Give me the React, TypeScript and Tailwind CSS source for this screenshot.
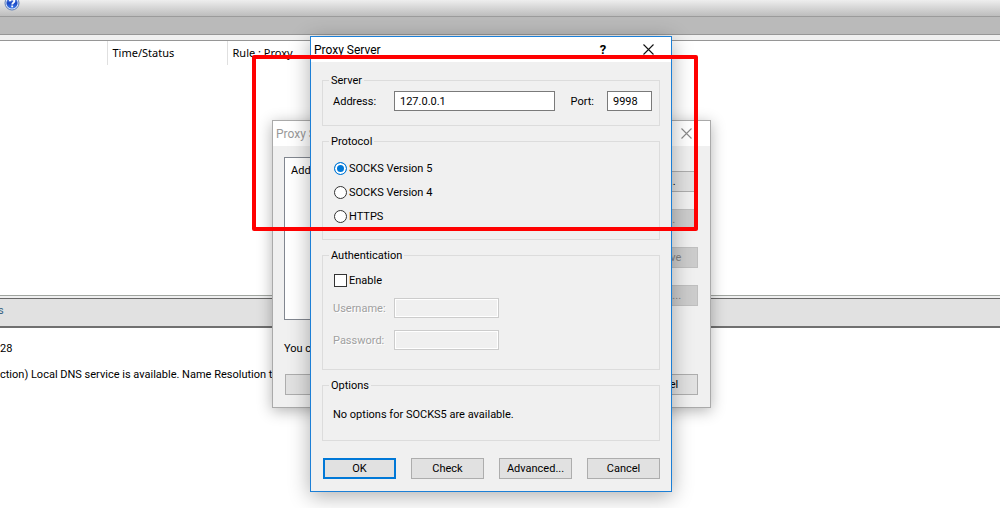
import React, { useState } from "react";
import type { ReactNode } from "react";

const BUTTON =
  "h-[21px] w-[73px] border border-[#adadad] bg-[#e1e1e1] text-center leading-5 text-black disabled:border-[#bfbfbf] disabled:bg-[#cccccc] disabled:text-[#838383]";
const FIELD = "h-5 border border-[#7a7a7a] bg-white px-[5px] text-black";
const DISABLED_FIELD =
  "h-5 w-[105px] border border-[#cccccc] bg-[#f0f0f0] shadow-[inset_0_0_0_1px_#ffffff]";

function HelpIcon() {
  return (
    <svg width="16" height="16" viewBox="0 0 16 16" aria-hidden="true">
      <defs>
        <linearGradient id="orb" x1="0" y1="0" x2="0" y2="1">
          <stop offset="0" stopColor="#7fa6ee" />
          <stop offset="0.5" stopColor="#1846c4" />
          <stop offset="1" stopColor="#3f7bea" />
        </linearGradient>
      </defs>
      <circle cx="8" cy="8" r="7" fill="#dfe8f8" stroke="#5f7fb8" strokeWidth="1" />
      <circle cx="8" cy="8" r="5.6" fill="url(#orb)" />
      <path
        d="M5.9 6.2C5.9 3.6 10.4 3.6 10.3 6.1C10.2 7.7 8.2 7.7 8.2 9.4M8.2 10.5V12.2"
        fill="none"
        stroke="#ffffff"
        strokeWidth="1.8"
      />
    </svg>
  );
}

function CloseIcon({ color }: { color: string }) {
  return (
    <svg width="11" height="11" viewBox="0 0 11 11" aria-hidden="true">
      <path d="M0.5 0.5L10.5 10.5M10.5 0.5L0.5 10.5" stroke={color} strokeWidth="1.1" />
    </svg>
  );
}

function Group({ title, className, children }: { title: string; className: string; children: ReactNode }) {
  return (
    <fieldset className={`min-w-0 border border-[#dcdcdc] px-[10px] ${className}`}>
      <legend className="-ml-1 h-[14px] px-[2px] leading-4">{title}</legend>
      {children}
    </fieldset>
  );
}

function ServerListDialog() {
  return (
    <section
      aria-label="Proxy servers"
      className="absolute top-[120px] left-[272px] w-[439px] border border-[#aaaaaa] bg-[#f0f0f0] shadow-[0_3px_14px_rgba(0,0,0,0.3)]"
    >
      <header className="flex h-[25px] items-center justify-between bg-white pr-[18px] pl-[3px] text-[#999999]">
        <h2 className="text-xs">Proxy S</h2>
        <button type="button" aria-label="Close list">
          <CloseIcon color="#8a8a8a" />
        </button>
      </header>
      <div className="px-3 pt-[11px] pb-3 pl-[11px]">
        <div className="flex">
          <div className="h-[163px] w-[320px] border border-[#828790] bg-white px-1.5 py-[5px]">Add</div>
          <div className="ml-auto flex flex-col gap-[17px] pt-[14px]">
            <button type="button" className={BUTTON}>Add...</button>
            <button type="button" disabled className={BUTTON}>Edit...</button>
            <button type="button" disabled className={BUTTON}>Remove</button>
            <button type="button" disabled className={BUTTON}>Check...</button>
          </div>
        </div>
        <p className="mt-[21px] leading-4">You c</p>
        <div className="mt-[17px] flex justify-between pl-px">
          <button type="button" aria-label="Accept" className={BUTTON}></button>
          <button type="button" className={BUTTON}>Cancel</button>
        </div>
      </div>
    </section>
  );
}

function ProxyServerDialog() {
  const [protocol, setProtocol] = useState("SOCKS Version 5");
  return (
    <section
      aria-label="Proxy server"
      className="absolute top-[36px] left-[310px] w-[362px] border border-[#1c7fd6] bg-[#f0f0f0] shadow-[0_4px_20px_rgba(0,0,0,0.32)]"
    >
      <header className="flex h-[25px] items-center bg-white pr-[17px] pl-[3px]">
        <h1 className="flex-1 text-xs">Proxy Server</h1>
        <button type="button" aria-label="Help" className="mr-9 w-2 text-[13px] font-bold">?</button>
        <button type="button" aria-label="Close">
          <CloseIcon color="#111111" />
        </button>
      </header>
      <div className="px-[11px] pt-[11px] pb-3">
        <Group title="Server" className="pt-1 pb-[14px]">
          <div className="flex items-center">
            <label htmlFor="address" className="w-[61px] pt-0.5">Address:</label>
            <input id="address" defaultValue="127.0.0.1" className={`${FIELD} w-[161px]`} />
            <label htmlFor="port" className="mr-[13px] ml-auto pt-0.5">Port:</label>
            <input id="port" defaultValue="9998" className={`${FIELD} mr-[-3px] w-[45px]`} />
          </div>
        </Group>
        <Group title="Protocol" className="mt-2 pt-2 pb-[11px]">
          {["SOCKS Version 5", "SOCKS Version 4", "HTTPS"].map((name) => (
            <label key={name} className="flex h-6 items-center gap-0.5 pl-px">
              <input
                type="radio"
                name="protocol"
                checked={protocol === name}
                onChange={() => setProtocol(name)}
                className="size-[13px] appearance-none rounded-full border border-[#333333] bg-white checked:border-[#0078d7] checked:bg-[#0078d7] checked:shadow-[inset_0_0_0_2px_#ffffff]"
              />
              <span className="pt-0.5">{name}</span>
            </label>
          ))}
        </Group>
        <Group title="Authentication" className="mt-2 pt-1.5 pb-[19px]">
          <label className="flex h-6 w-fit items-center gap-0.5 pl-px">
            <input type="checkbox" className="size-[13px] appearance-none border border-[#333333] bg-white checked:bg-[#0078d7]" />
            <span className="pt-0.5">Enable</span>
          </label>
          <div className="mt-1.5 flex flex-col gap-3 text-[#a0a0a0] [text-shadow:1px_1px_0_#ffffff]">
            <div className="flex items-center">
              <label htmlFor="username" className="w-[61px] pt-0.5">Username:</label>
              <input id="username" disabled className={DISABLED_FIELD} />
            </div>
            <div className="flex items-center">
              <label htmlFor="password" className="w-[61px] pt-0.5">Password:</label>
              <input id="password" type="password" disabled className={DISABLED_FIELD} />
            </div>
          </div>
        </Group>
        <Group title="Options" className="mt-2 pt-[15px] pb-[17px]">
          <p className="leading-4">No options for SOCKS5 are available.</p>
        </Group>
        <div className="mt-[17px] flex justify-between pl-px">
          <button
            type="button"
            className="h-[21px] w-[73px] border-2 border-[#0078d7] bg-[#e1e1e1] text-center leading-[18px]"
          >
            OK
          </button>
          <button type="button" className={BUTTON}>Check</button>
          <button type="button" className={BUTTON}>Advanced...</button>
          <button type="button" className={BUTTON}>Cancel</button>
        </div>
      </div>
    </section>
  );
}

export default function App() {
  return (
    <main className="relative flex h-screen flex-col overflow-hidden bg-white font-[Roboto,'Liberation_Sans',sans-serif] text-[11px] text-black">
      <div className="h-[17px] border-b border-[#9b9b9b] bg-linear-to-b from-[#eeeeee] to-[#bdbdbd] pl-1">
        <button type="button" aria-label="Help topics" className="-mt-[5px] block">
          <HelpIcon />
        </button>
      </div>
      <div className="h-[18px] border-b border-[#969696] bg-[#bababa]" />
      <div className="h-1.5 border-b border-[#969696] bg-[#f0f0f0]" />
      <div className="h-[254px]">
        <table className="table-fixed border-collapse font-['Noto_Sans',sans-serif]">
          <thead>
            <tr className="h-6 text-left">
              <th aria-label="Target" className="w-[107px] border-r border-[#e0e0e0]" />
              <th className="w-[120px] border-r border-[#e0e0e0] pl-[5px] font-normal">Time/Status</th>
              <th className="pl-[5px] font-normal">Rule : Proxy</th>
            </tr>
          </thead>
        </table>
      </div>
      <div className="h-1 border-t border-b border-t-[#a0a5a0] border-b-[#696969] bg-[#f0f0f0]" />
      <div className="h-[29px] border-b-2 border-[#707070] bg-[#e1e1e1] leading-6 text-[#35617f]">
        <span className="-ml-0.5">s</span>
      </div>
      <div className="flex-1 pt-[14px] leading-[14px]">
        <p>28</p>
        <p className="mt-3">ction) Local DNS service is available. Name Resolution th</p>
      </div>
      <ServerListDialog />
      <ProxyServerDialog />
      <div className="pointer-events-none absolute top-[55px] left-[252px] h-[176px] w-[446px] rounded-xs border-4 border-[#ff0000]" />
    </main>
  );
}
